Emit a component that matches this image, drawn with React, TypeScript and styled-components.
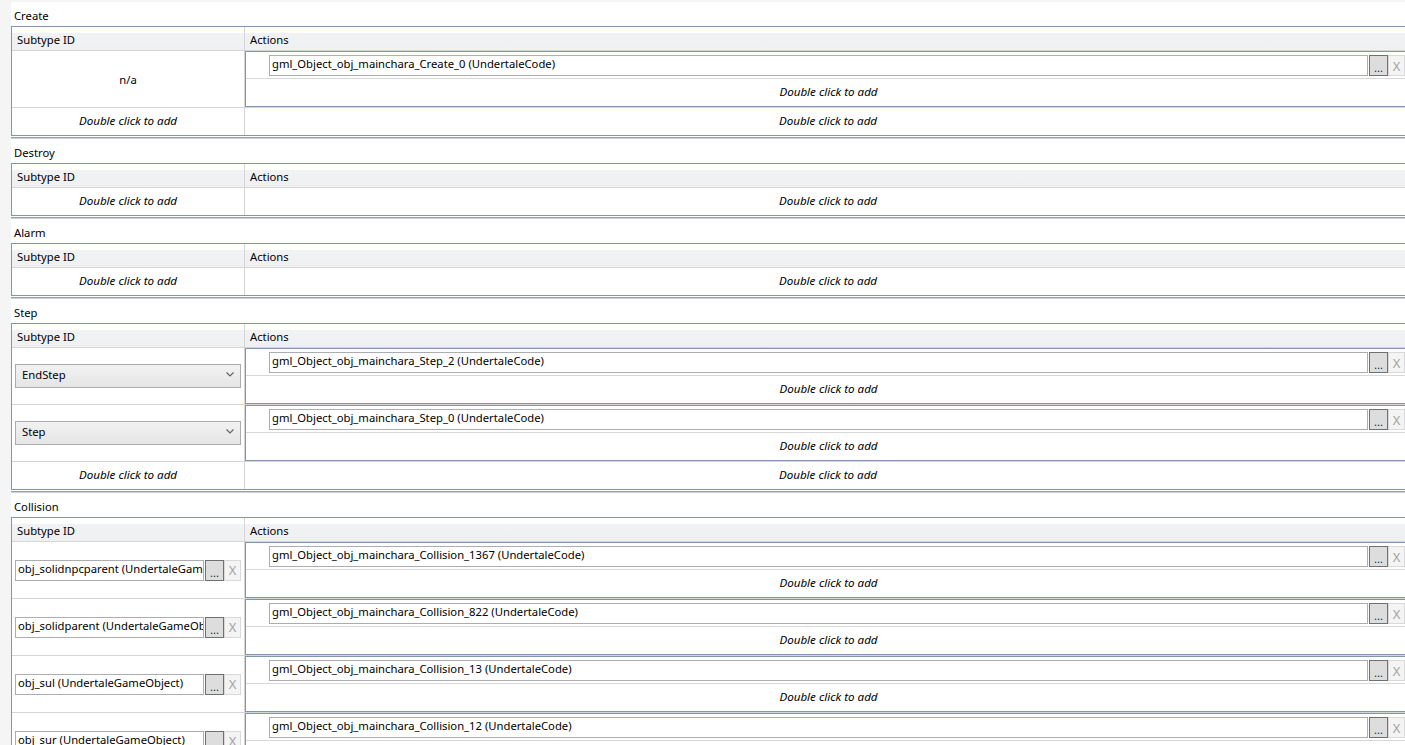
import React from 'react'

import styled, { createGlobalStyle } from 'styled-components'

type Subtype =
  | { kind: 'na' }
  | { kind: 'combo'; value: string }
  | { kind: 'object'; value: string }

type EventRow = {
  subtype: Subtype
  actions: string[]
}

type EventSection = {
  title: string
  rows: EventRow[]
}

const sections: EventSection[] = [
  {
    title: 'Create',
    rows: [{ subtype: { kind: 'na' }, actions: ['gml_Object_obj_mainchara_Create_0 (UndertaleCode)'] }],
  },
  { title: 'Destroy', rows: [] },
  { title: 'Alarm', rows: [] },
  {
    title: 'Step',
    rows: [
      {
        subtype: { kind: 'combo', value: 'EndStep' },
        actions: ['gml_Object_obj_mainchara_Step_2 (UndertaleCode)'],
      },
      {
        subtype: { kind: 'combo', value: 'Step' },
        actions: ['gml_Object_obj_mainchara_Step_0 (UndertaleCode)'],
      },
    ],
  },
  {
    title: 'Collision',
    rows: [
      {
        subtype: { kind: 'object', value: 'obj_solidnpcparent (UndertaleGameObject)' },
        actions: ['gml_Object_obj_mainchara_Collision_1367 (UndertaleCode)'],
      },
      {
        subtype: { kind: 'object', value: 'obj_solidparent (UndertaleGameObject)' },
        actions: ['gml_Object_obj_mainchara_Collision_822 (UndertaleCode)'],
      },
      {
        subtype: { kind: 'object', value: 'obj_sul (UndertaleGameObject)' },
        actions: ['gml_Object_obj_mainchara_Collision_13 (UndertaleCode)'],
      },
      {
        subtype: { kind: 'object', value: 'obj_sur (UndertaleGameObject)' },
        actions: ['gml_Object_obj_mainchara_Collision_12 (UndertaleCode)'],
      },
    ],
  },
]

const ADD_TEXT = 'Double click to add'

const Chevron = () => (
  <svg width="8" height="5" viewBox="0 0 8 5">
    <polyline points="0.5,0.5 4,4 7.5,0.5" fill="none" stroke="#606060" strokeWidth="1.1" />
  </svg>
)

const ReferenceField = ({ value }: { value: string }) => (
  <FieldWrap>
    <TextBox>{value}</TextBox>
    <PickButton>...</PickButton>
    <ClearButton>X</ClearButton>
  </FieldWrap>
)

const SubtypeContent = ({ subtype }: { subtype: Subtype }) => {
  if (subtype.kind === 'na') return <span>n/a</span>
  if (subtype.kind === 'combo') {
    return (
      <ComboBox>
        <span>{subtype.value}</span>
        <Chevron />
      </ComboBox>
    )
  }
  return <ReferenceField value={subtype.value} />
}

const Section = ({ section }: { section: EventSection }) => (
  <SectionBox>
    <SectionTitle>{section.title}</SectionTitle>
    <Table>
      <HeaderRow>
        <HeaderCell $divider>Subtype ID</HeaderCell>
        <HeaderCell>Actions</HeaderCell>
      </HeaderRow>
      {section.rows.map((row, i) => (
        <Row key={i} $height={56}>
          <SubtypeCell $center={row.subtype.kind === 'na'}>
            <SubtypeContent subtype={row.subtype} />
          </SubtypeCell>
          <ActionsCell>
            <ActionBlock>
              {row.actions.map(action => (
                <ActionItem key={action}>
                  <ReferenceField value={action} />
                </ActionItem>
              ))}
              <AddLine>
                <AddText>{ADD_TEXT}</AddText>
              </AddLine>
            </ActionBlock>
          </ActionsCell>
        </Row>
      ))}
      <Row $height={27} $last>
        <SubtypeCell $center>
          <AddText>{ADD_TEXT}</AddText>
        </SubtypeCell>
        <ActionsCell>
          <AddText>{ADD_TEXT}</AddText>
        </ActionsCell>
      </Row>
    </Table>
    <Separator />
  </SectionBox>
)

export default function App() {
  return (
    <>
      <GlobalStyle />
      <Page>
        {sections.map(s => (
          <Section key={s.title} section={s} />
        ))}
      </Page>
    </>
  )
}

// styled components
const GlobalStyle = createGlobalStyle`
  html, body {
    margin: 0;
    padding: 0;
    background: #f5f5f5;
    overflow: hidden;
  }

  body {
    font-family: 'Noto Sans', 'Open Sans', sans-serif;
    font-size: 11.25px;
    color: #000;
  }
`

const Page = styled.div`
  margin: 2px 0 0 11px;
  width: 1401px;
  height: 743px;
  background: #fff;
`

const SectionBox = styled.section`
  padding-top: 4px;
`

const SectionTitle = styled.div`
  height: 20px;
  line-height: 20px;
  padding-left: 3px;
`

const Table = styled.div`
  box-sizing: border-box;
  width: 1401px;
  border: 1px solid #8097b1;
`

const HeaderRow = styled.div`
  display: grid;
  grid-template-columns: 233px 1fr;
  box-sizing: border-box;
  height: 24px;
  border-bottom: 1px solid #d5d5d5;
  background: linear-gradient(to bottom, #fff 0, #fff 6px, #f1f2f4 6px, #eef0f2 100%);
`

const HeaderCell = styled.div<{ $divider?: boolean }>`
  padding: 1px 0 0 5px;
  line-height: 23px;
  border-right: ${p => (p.$divider ? '1px solid #d5d5d5' : 'none')};
`

const Row = styled.div<{ $height: number; $last?: boolean }>`
  display: grid;
  grid-template-columns: 233px 1fr;
  height: ${p => p.$height}px;
  border-bottom: ${p => (p.$last ? 'none' : '1px solid #d5d5d5')};
`

const SubtypeCell = styled.div<{ $center?: boolean }>`
  box-sizing: border-box;
  display: flex;
  align-items: center;
  justify-content: ${p => (p.$center ? 'center' : 'stretch')};
  padding: 0 3px;
  border-right: 1px solid #d5d5d5;
  min-width: 0;
`

const ActionsCell = styled.div`
  display: flex;
  align-items: center;
  justify-content: center;
  min-width: 0;
`

const AddText = styled.span`
  font-style: italic;
  font-size: 11.6px;
  margin-bottom: 2px;
`

const ActionBlock = styled.div`
  box-sizing: border-box;
  align-self: stretch;
  flex: 1;
  display: flex;
  flex-direction: column;
  border: 1px solid #8097b1;
  border-right: none;
`

const ActionItem = styled.div`
  box-sizing: border-box;
  display: flex;
  height: 27px;
  padding: 3px 6px 0 23px;
  border-bottom: 1px solid #d8d8d8;
`

const AddLine = styled.div`
  flex: 1;
  display: flex;
  align-items: center;
  justify-content: center;
`

const FieldWrap = styled.div`
  flex: 1;
  display: flex;
  height: 21px;
  min-width: 0;
`

const TextBox = styled.div`
  box-sizing: border-box;
  flex: 1;
  min-width: 0;
  height: 21px;
  padding: 0 2px;
  line-height: 16px;
  border: 1px solid #abadb3;
  background: #fff;
  white-space: nowrap;
  overflow: hidden;
`

const PickButton = styled.div`
  box-sizing: border-box;
  width: 19px;
  height: 21px;
  margin-left: 1px;
  display: flex;
  align-items: flex-end;
  justify-content: center;
  padding-bottom: 3px;
  line-height: 8px;
  border: 1px solid #707070;
  background: #dddddd;
  color: #1a2a40;
`

const ClearButton = styled.div`
  box-sizing: border-box;
  width: 17px;
  height: 21px;
  display: flex;
  align-items: center;
  justify-content: center;
  font-size: 13px;
  border: 1px solid #d9d9d9;
  background: #f4f4f4;
  color: #a3a3a3;
`

const ComboBox = styled.div`
  box-sizing: border-box;
  flex: 1;
  height: 24px;
  display: flex;
  align-items: center;
  justify-content: space-between;
  padding: 0 6px 2px 6px;
  margin-bottom: 1px;
  border: 1px solid #acacac;
  background: linear-gradient(to bottom, #f2f2f2, #e5e5e5);
`

const Separator = styled.div`
  margin-top: 1px;
  height: 1px;
  border-top: 1px solid #a0a0a0;
  background: #d0d0d0;
`
